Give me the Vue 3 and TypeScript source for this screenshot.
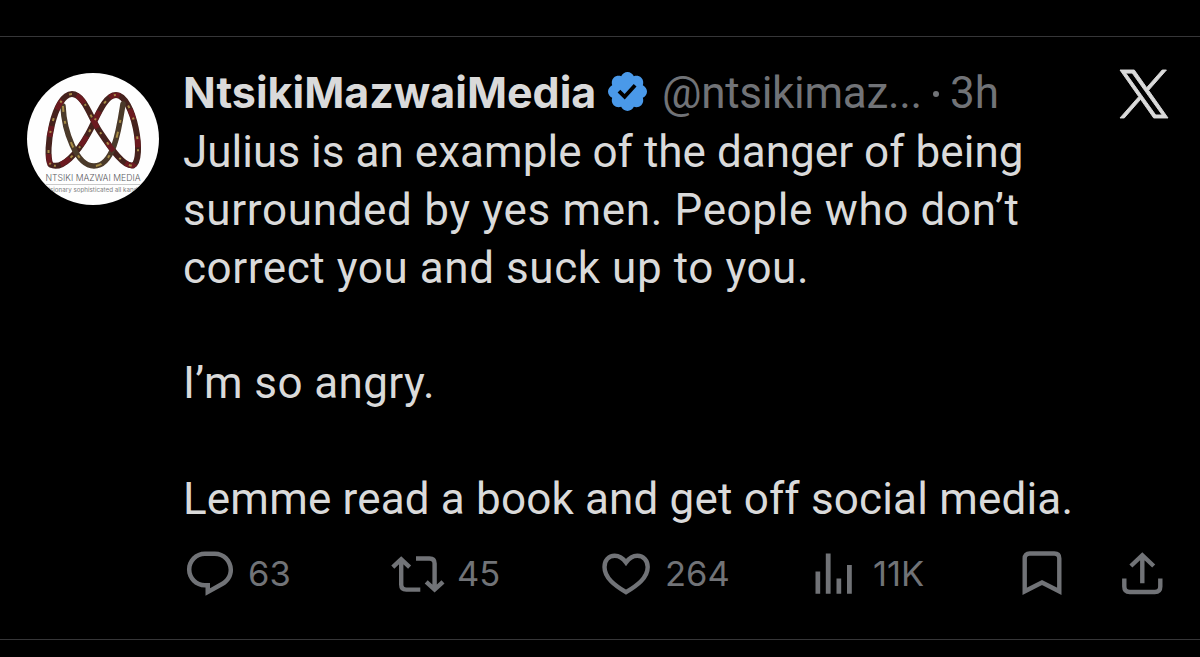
<script setup lang="ts">
interface Line {
  text: string
  tracking: number
}

const lines: Line[] = [
  { text: 'Julius is an example of the danger of being', tracking: 0.04 },
  { text: 'surrounded by yes men. People who don’t', tracking: 0.66 },
  { text: 'correct you and suck up to you.', tracking: 0.57 },
  { text: '', tracking: 0 },
  { text: 'I’m so angry.', tracking: 0.38 },
  { text: '', tracking: 0 },
  { text: 'Lemme read a book and get off social media.', tracking: 0.17 },
]
</script>

<template>
  <main class="screen">
    <article class="post">
      <svg class="avatar" viewBox="0 0 132 132">
        <defs>
          <clipPath id="disc"><circle cx="66" cy="66" r="66" /></clipPath>
        </defs>
        <g clip-path="url(#disc)">
          <rect width="132" height="132" fill="#fefefe" />
          <g fill="none" stroke-linecap="round" stroke-linejoin="round">
            <g stroke="#46221d" stroke-width="6">
              <path d="M23.500 91.500C17 78 27 21 45 21C57 21 64 46 73 59C85 77 97 94 106 92.500C118 87 107 22 89 22C77 22 69 47 61 61C51 79 35 98 23.500 91.500" />
              <path d="M36 33C37 57 49 93 67 93C87 93 92 56 96 31" stroke="#4b3a2a" stroke-width="5.500" />
            </g>
            <path d="M23.500 91.500C17 78 27 21 45 21C57 21 64 46 73 59C85 77 97 94 106 92.500C118 87 107 22 89 22C77 22 69 47 61 61C51 79 35 98 23.500 91.500" stroke="#6c1a20" stroke-width="5.200" stroke-dasharray="11 17" stroke-linecap="butt" />
            <g stroke="#a68b45" stroke-width="2" stroke-dasharray="2 10 3 17" stroke-linecap="butt">
              <path d="M23.500 91.500C17 78 27 21 45 21C57 21 64 46 73 59C85 77 97 94 106 92.500C118 87 107 22 89 22C77 22 69 47 61 61C51 79 35 98 23.500 91.500" />
              <path d="M36 33C37 57 49 93 67 93C87 93 92 56 96 31" stroke-dasharray="6 9 3 19" />
            </g>
          </g>
          <text class="brand" x="18.500" y="108" textLength="95" lengthAdjust="spacingAndGlyphs">NTSIKI MAZWAI MEDIA</text>
          <path d="M8 111.500H124" stroke="#bdbdbd" stroke-width="0.800" />
          <text class="motto" x="18" y="118.500" textLength="96" lengthAdjust="spacingAndGlyphs">visionary sophisticated all kanda</text>
        </g>
      </svg>

      <div class="content">
        <header class="head">
          <span class="name">NtsikiMazwaiMedia</span>
          <svg class="badge" viewBox="1.750 1.750 20.500 20.500">
            <path fill="#4a99e9" d="M22.250 12c0-1.430-.880-2.670-2.190-3.340.460-1.390.200-2.900-.810-3.910s-2.520-1.270-3.910-.810c-.660-1.310-1.910-2.190-3.340-2.190s-2.670.880-3.330 2.190c-1.400-.460-2.910-.200-3.920.810s-1.260 2.520-.800 3.910c-1.310.670-2.200 1.910-2.200 3.340s.890 2.670 2.200 3.340c-.460 1.390-.210 2.900.800 3.910s2.520 1.260 3.910.810c.670 1.310 1.910 2.190 3.340 2.190s2.680-.880 3.340-2.190c1.390.450 2.900.200 3.910-.810s1.270-2.520.810-3.910c1.310-.670 2.190-1.910 2.190-3.340z" />
            <path fill="#000" d="M10.540 16.200L6.800 12.460l1.410-1.420 2.260 2.260 4.800-5.230 1.470 1.360z" />
          </svg>
          <span class="handle">@ntsikimaz...</span>
          <span class="sep"></span>
          <span class="time">3h</span>
          <svg class="logo" viewBox="0 0 1200 1227" preserveAspectRatio="none">
            <path d="M714.163 519.284L1160.890 0H1055.030L667.137 450.887L357.328 0H0L468.492 681.821L0 1226.370H105.866L515.491 750.218L842.672 1226.370H1200L714.137 519.284H714.163ZM569.165 687.828L521.697 619.934L144.011 79.694H306.615L611.412 515.685L658.880 583.579L1055.080 1150.300H892.476L569.165 687.854V687.828Z" />
          </svg>
        </header>

        <p class="body">
          <span v-for="(line, i) in lines" :key="i" class="line" :style="{ letterSpacing: line.tracking + 'px' }">{{ line.text }}</span>
        </p>

        <footer class="actions">
          <span class="action reply">
            <svg width="54" height="54" viewBox="0 0 24 24">
              <path d="M1.751 10c0-4.420 3.584-8 8.005-8h4.366c4.490 0 8.129 3.640 8.129 8.130 0 2.960-1.607 5.680-4.196 7.110l-8.054 4.460v-3.690h-.067c-4.490.100-8.183-3.510-8.183-8.010zm8.005-6c-3.317 0-6.005 2.690-6.005 6 0 3.370 2.770 6.080 6.138 6.010l.351-.010h1.761v2.300l5.087-2.810c1.951-1.080 3.163-3.130 3.163-5.360 0-3.390-2.744-6.130-6.129-6.130H9.756z" />
            </svg>
            <span class="count">63</span>
          </span>
          <span class="action repost">
            <svg class="stroked" width="54" height="54" viewBox="0 0 54 54">
              <path d="M1.800 20.200L10.200 12.200L18.600 20.200M10.200 13V37.500Q10.200 42.600 15.300 42.600H29.300M25 11.500H38.500Q43.600 11.500 43.600 16.500V42M35.200 34.800L43.600 42.600L52 34.800" />
            </svg>
            <span class="count">45</span>
          </span>
          <span class="action like">
            <svg class="stroked" width="54" height="54" viewBox="0 0 54 54">
              <path d="M27 15.500C23.500 10.500 19.500 8.700 15.700 8.700C9.500 8.700 5.500 13.500 5.500 20C5.500 31 16 38.500 27 45.200C38 38.500 48.700 31 48.700 20C48.700 13.500 44.500 8.700 38.300 8.700C34.500 8.700 30.500 10.500 27 15.500Z" />
            </svg>
            <span class="count">264</span>
          </span>
          <span class="action views">
            <svg width="38" height="54" viewBox="0 0 38 54">
              <path d="M.500 24.500H5.200V46.800H.500ZM10.800 6.600H15.600V46.800H10.800ZM21.500 31.500H26.200V46.800H21.500ZM32 18H36.800V46.800H32Z" />
            </svg>
            <span class="count">11K</span>
          </span>
          <svg class="stroked bookmark" width="40" height="54" viewBox="0 0 40 54">
            <path d="M2.700 44.300V11.500Q2.700 6.500 7.700 6.500H32.300Q37.300 6.500 37.300 11.500V44.300L20 35.500Z" />
          </svg>
          <svg class="stroked share" width="42" height="54" viewBox="0 0 42 54">
            <path d="M9.900 19L21.300 8.200L32.700 19M21.300 8.500V36.300M3.300 31.500V39.500Q3.300 45 8.800 45H33.800Q39.300 45 39.300 39.500V31.500" />
          </svg>
        </footer>
      </div>
    </article>
  </main>
</template>

<style>
body {
  margin: 0;
  background: #000;
}
</style>

<style scoped>
.screen {
  box-sizing: border-box;
  height: 657px;
  padding: 36px 0 17px;
  overflow: hidden;
  background: #000;
}

.post {
  box-sizing: border-box;
  height: 604px;
  display: grid;
  grid-template-columns: 132px 1fr;
  column-gap: 24px;
  padding: 27px 32px 0 27px;
  border-top: 1px solid #363638;
  border-bottom: 1px solid #363638;
}

.avatar {
  width: 132px;
  height: 132px;
  margin-top: 9px;
}

.brand {
  font: 300 9.500px Inter, sans-serif;
  fill: #5c5c62;
}

.motto {
  font: 5.600px Inter, sans-serif;
  fill: #7e7e82;
}

.head {
  display: flex;
  align-items: center;
  height: 60px;
  white-space: nowrap;
  font: 44px/58px Roboto, sans-serif;
  color: #717377;
}

.name {
  width: 413px;
  height: 62px;
  font: 700 43px/58px Inter, sans-serif;
  color: #dadada;
}

.badge {
  width: 39px;
  height: 39px;
  margin: 0 15px 5px 12px;
  flex: none;
}

.handle {
  width: 258px;
  height: 60px;
  letter-spacing: -0.3px;
}

.time {
  height: 60px;
}

.sep {
  width: 6px;
  height: 6px;
  margin: 0 11px 0 13px;
  border-radius: 50%;
  background: #717377;
}

.logo {
  width: 48px;
  height: 48px;
  margin-left: auto;
  overflow: visible;
  fill: #dadada;
  stroke: #dadada;
  stroke-width: 24;
}

.body {
  margin: 0;
  font: 44px/57.800px Roboto, sans-serif;
  color: #dadada;
}

.line {
  display: block;
  height: 57.800px;
  white-space: pre;
}

.actions {
  display: flex;
  align-items: center;
  height: 54px;
  margin-top: 18px;
}

.actions svg {
  flex: none;
  fill: #717377;
}

.actions .stroked {
  fill: none;
  stroke: #717377;
  stroke-width: 4.400;
}

.action {
  display: flex;
  align-items: center;
  height: 54px;
}

.count {
  font: 34.500px/54px Inter, sans-serif;
  color: #717377;
}

.reply {
  width: 208px;
  gap: 11px;
}

.repost {
  width: 208px;
  gap: 12px;
}

.like {
  width: 216px;
  gap: 12px;
}

.views {
  width: 207px;
  gap: 20px;
}

.share {
  margin-left: 59px;
}
</style>
